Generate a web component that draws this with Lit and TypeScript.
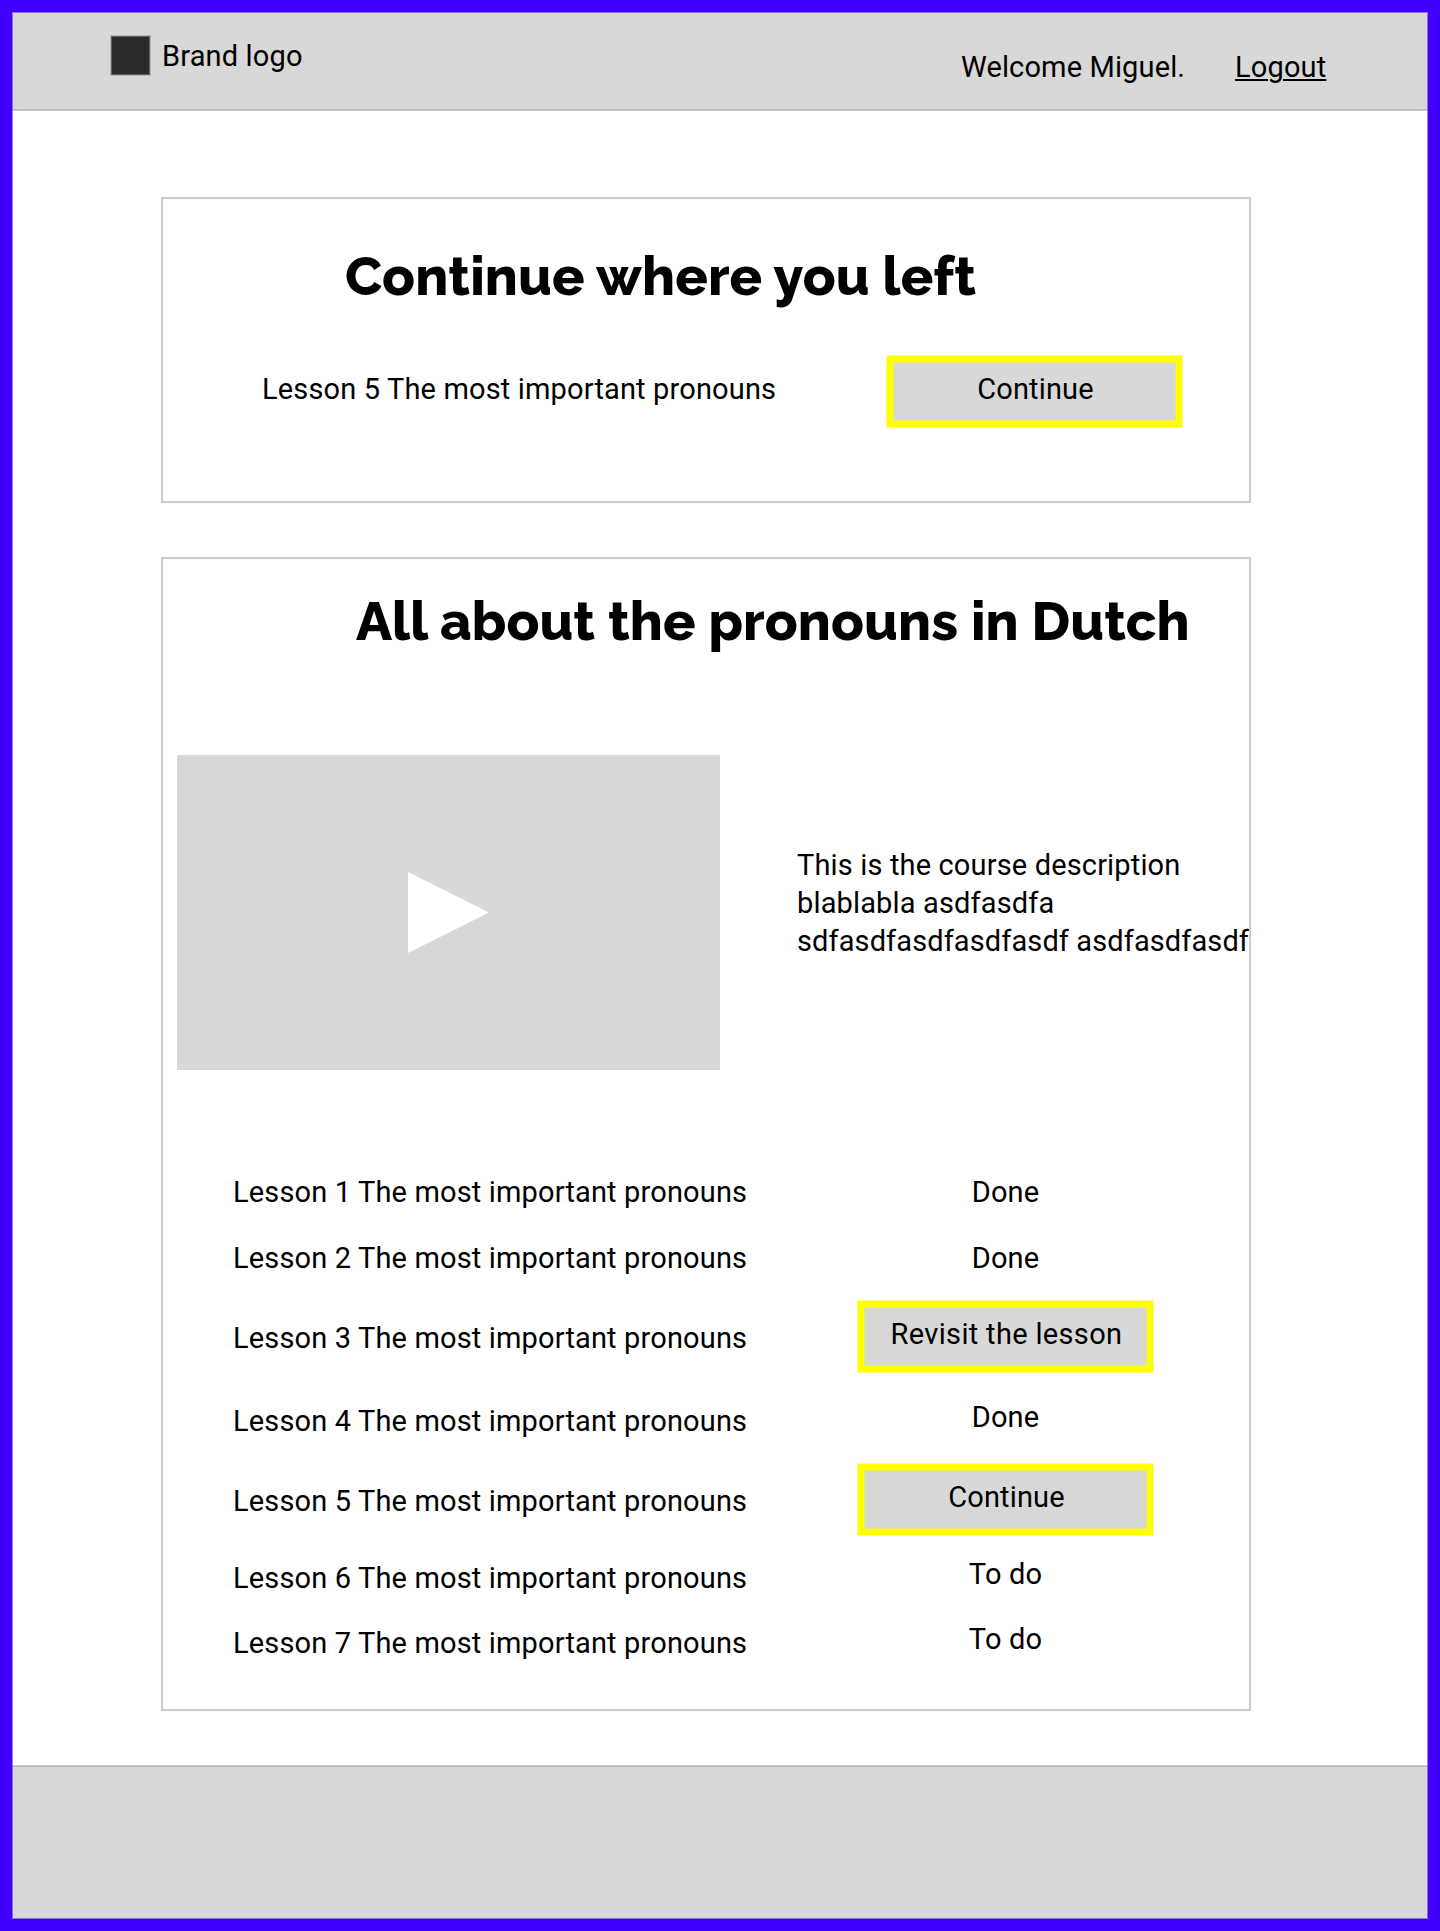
import { LitElement, html, css } from "lit";

type Kind = "done" | "todo" | "revisit" | "continue";
interface Lesson { n: number; kind: Kind; }

const TITLE = "The most important pronouns";
const LABELS: Record<Kind, string> = {
  done: "Done",
  todo: "To do",
  revisit: "Revisit the lesson",
  continue: "Continue",
};
const LESSONS: Lesson[] = [
  { n: 1, kind: "done" },
  { n: 2, kind: "done" },
  { n: 3, kind: "revisit" },
  { n: 4, kind: "done" },
  { n: 5, kind: "continue" },
  { n: 6, kind: "todo" },
  { n: 7, kind: "todo" },
];

class ActionButton extends LitElement {
  static styles = css`
    :host { display: block; width: 297px; height: 73px; flex: none; }
    .btn {
      display: flex; justify-content: center; align-items: flex-start;
      box-sizing: border-box; width: 100%; height: 100%;
      padding: 15px 0 0 2px; margin: 0; border: 0; border-radius: 0;
      background: #d8d8d8; color: #000; font: inherit; letter-spacing: inherit; white-space: nowrap;
      box-shadow: inset 0 0 0 1px #ffff80, inset 0 0 0 7px #ff0, inset 0 0 0 8px #ecec6c;
    }
  `;
  render() { return html`<button class="btn"><slot></slot></button>`; }
}
customElements.define("action-button", ActionButton);

class AppRoot extends LitElement {
  static styles = css`
    :host {
      display: block; color: #000;
      font: 29px/38px Roboto, "Liberation Sans", sans-serif; letter-spacing: 0.15px;
    }
    .frame {
      box-sizing: border-box; width: 1440px; height: 1931px;
      border: 12px solid #4000ff; padding: 1px; background: #9f80ff;
      display: flex; flex-direction: column;
    }
    .header {
      box-sizing: border-box; height: 98px; flex: none; display: flex; align-items: flex-start;
      padding: 0 9px 0 97px; background: #d8d8d8; border-bottom: 1px solid #cbcbcb;
      box-shadow: inset 0 -1px #b7b7b7, 0 -1px #8c6cec, -1px 0 #8c6cec, 1px 0 #8c6cec;
    }
    .brand { display: flex; gap: 11px; }
    .logo {
      box-sizing: border-box; width: 41px; height: 41px; margin-top: 22px;
      background: #2a2a2a; border: 1px solid #b7b7b7; box-shadow: inset 0 0 0 1px #606060;
    }
    .brand-name { margin-top: 24px; }
    .nav { display: flex; margin-left: auto; padding-top: 35px; }
    .welcome { width: 274px; letter-spacing: 0.13px; }
    .logout {
      width: 183px; text-decoration: underline;
      text-decoration-thickness: 2px; text-underline-offset: 2px;
    }
    .main {
      flex: 1; display: flex; flex-direction: column; gap: 54px;
      padding: 86px 0 0 148px; background: #fff;
    }
    .card { box-sizing: border-box; width: 1090px; border: 2px solid #cbcbcb; }
    .resume { height: 306px; padding-top: 45px; }
    .course { height: 1154px; padding-top: 30px; }
    h1 {
      margin: 0; font: 800 54px/64px Raleway, Lato, sans-serif; letter-spacing: 0.14px; white-space: nowrap;
    }
    .resume h1 { padding-left: 182px; }
    .course h1 { padding-left: 193px; }
    .resume-row { display: flex; margin-top: 47px; padding-left: 99px; }
    .resume-label { width: 624px; padding-top: 15px; }
    .intro { display: flex; gap: 77px; margin-top: 102px; padding-left: 14px; }
    .video {
      width: 543px; height: 315px; background: #d8d8d8; flex: none;
      display: flex; align-items: center; justify-content: center;
    }
    .play { display: block; width: 81px; height: 81px; fill: #fff; }
    .description { margin: 91px 0 0; white-space: nowrap; }
    .dense { letter-spacing: 0.1px; }
    .lessons { list-style: none; margin: 103px 0 0; padding: 0 0 0 70px; }
    .lesson { display: flex; }
    .lesson + .lesson { margin-top: 23px; }
    .lesson:nth-child(2) { margin-top: 28px; }
    .lesson:nth-child(4) { margin-top: 25px; }
    .lesson:nth-child(6) { margin-top: 19px; }
    .lesson-label { width: 624px; flex: none; white-space: nowrap; }
    .lesson:nth-child(n + 3) .lesson-label { padding-top: 4px; }
    .lesson.action .lesson-label { padding-top: 19px; }
    .status { width: 297px; text-align: center; }
    .revisit { letter-spacing: 0.33px; }
    .footer {
      box-sizing: border-box; height: 153px; flex: none; background: #d8d8d8; border-top: 1px solid #cbcbcb;
      box-shadow: inset 0 1px #b7b7b7, 0 1px #8c6cec, -1px 0 #8c6cec, 1px 0 #8c6cec;
    }
  `;

  private lesson({ n, kind }: Lesson) {
    const action = kind === "revisit" || kind === "continue";
    return html`
      <li class="lesson ${action ? "action" : ""}">
        <span class="lesson-label">Lesson ${n} ${TITLE}</span>
        ${action
          ? html`<action-button class=${kind}>${LABELS[kind]}</action-button>`
          : html`<span class="status">${LABELS[kind]}</span>`}
      </li>`;
  }

  render() {
    return html`
      <div class="frame">
        <header class="header">
          <div class="brand">
            <span class="logo"></span>
            <span class="brand-name">Brand logo</span>
          </div>
          <nav class="nav">
            <span class="welcome">Welcome Miguel.</span>
            <span class="logout">Logout</span>
          </nav>
        </header>
        <main class="main">
          <section class="card resume">
            <h1>Continue where you left</h1>
            <div class="resume-row">
              <span class="resume-label">Lesson 5 ${TITLE}</span>
              <action-button>Continue</action-button>
            </div>
          </section>
          <section class="card course">
            <h1>All about the pronouns in Dutch</h1>
            <div class="intro">
              <div class="video">
                <svg class="play" viewBox="0 0 81 81"><path d="M0 0L81 40.5L0 81Z" /></svg>
              </div>
              <p class="description">
                This is the course description<br />blablabla asdfasdfa<br /><span class="dense">sdfasdfasdfasdfasdf asdfasdfasdf</span>
              </p>
            </div>
            <ul class="lessons">${LESSONS.map((l) => this.lesson(l))}</ul>
          </section>
        </main>
        <footer class="footer"></footer>
      </div>`;
  }
}
customElements.define("app-root", AppRoot);
